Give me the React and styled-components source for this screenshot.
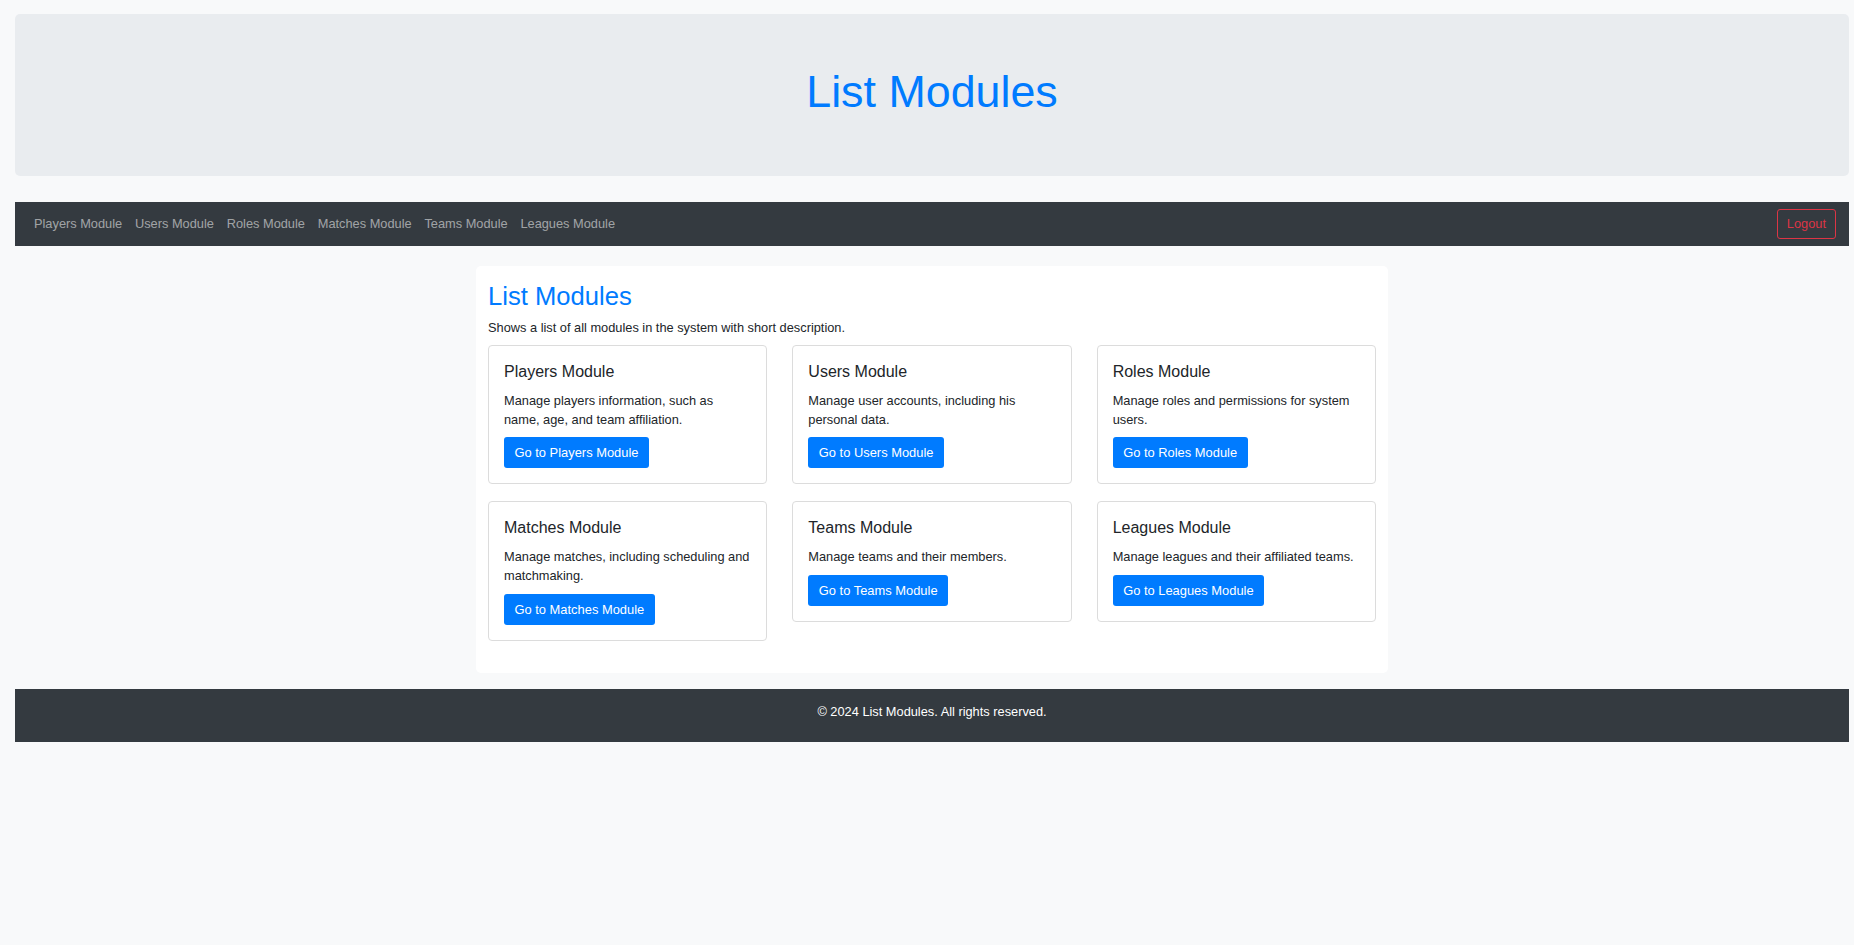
import styled, { createGlobalStyle } from "styled-components";

const GlobalStyle = createGlobalStyle`
  html, body {
    margin: 0;
    padding: 0;
    background: #f8f9fa;
    font-family: "Liberation Sans", Arial, sans-serif;
    color: #212529;
  }
  * { box-sizing: border-box; }
`;

const modules = [
  { name: "Players Module", text: "Manage players information, such as name, age, and team affiliation." },
  { name: "Users Module", text: "Manage user accounts, including his personal data." },
  { name: "Roles Module", text: "Manage roles and permissions for system users." },
  { name: "Matches Module", text: "Manage matches, including scheduling and matchmaking." },
  { name: "Teams Module", text: "Manage teams and their members." },
  { name: "Leagues Module", text: "Manage leagues and their affiliated teams." },
];

const Page = styled.div`
  padding: 14px 5px 0 15px;
`;

const Header = styled.header`
  background: #e9ecef;
  border-radius: 5px;
  padding: 51px 0 57px;
  text-align: center;

  h1 {
    margin: 0;
    font-size: 44.8px;
    line-height: 1.2;
    font-weight: 400;
    color: #007bff;
  }
`;

const Navbar = styled.nav`
  margin-top: 26px;
  height: 44px;
  background: #343a40;
  display: flex;
  align-items: center;
  justify-content: space-between;
  padding: 0 13px 0 12.6px;
`;

const NavLinks = styled.div`
  display: flex;
  align-items: center;
`;

const NavLink = styled.a`
  padding: 0 6.4px;
  font-size: 12.8px;
  color: rgba(255, 255, 255, 0.55);
  text-decoration: none;
  cursor: pointer;
`;

const LogoutButton = styled.button`
  height: 30px;
  padding: 0 9px;
  font-family: inherit;
  font-size: 12.8px;
  color: #dc3545;
  background: transparent;
  border: 1px solid #dc3545;
  border-radius: 3px;
`;

const Main = styled.main`
  width: 912px;
  margin: 20px auto 0;
  background: #fff;
  border-radius: 5px;
  padding: 15px 12px 32px;
`;

const Title = styled.h2`
  margin: 0;
  font-size: 25.6px;
  line-height: 1.2;
  font-weight: 400;
  color: #007bff;
`;

const Lead = styled.p`
  margin: 8px 0 7px;
  font-size: 12.8px;
  line-height: 1.45;
`;

const Grid = styled.div`
  display: grid;
  grid-template-columns: repeat(3, 1fr);
  column-gap: 25px;
  row-gap: 17px;
  align-items: start;
`;

const ModuleCard = styled.div`
  border: 1px solid #dcdcdc;
  border-radius: 4px;
  padding: 16px 15px 15px;
  background: #fff;

  h3 {
    margin: 0;
    font-size: 16px;
    line-height: 1.2;
    font-weight: 400;
    color: #212529;
  }

  p {
    margin: 11px 0 8px;
    font-size: 12.8px;
    line-height: 1.45;
  }
`;

const GoButton = styled.a`
  display: inline-block;
  padding: 6px 10.5px;
  font-size: 12.9px;
  line-height: 19px;
  color: #fff;
  background: #007bff;
  border-radius: 3px;
  text-decoration: none;
  cursor: pointer;
`;

const Footer = styled.footer`
  margin-top: 16px;
  background: #343a40;
  color: #fff;
  text-align: center;
  font-size: 12.8px;
  line-height: 19px;
  padding: 13px 0 21px;
`;

export default function App() {
  return (
    <>
      <GlobalStyle />
      <Page>
        <Header>
          <h1>List Modules</h1>
        </Header>
        <Navbar>
          <NavLinks>
            {modules.map((m) => (
              <NavLink key={m.name}>{m.name}</NavLink>
            ))}
          </NavLinks>
          <LogoutButton>Logout</LogoutButton>
        </Navbar>
        <Main>
          <Title>List Modules</Title>
          <Lead>Shows a list of all modules in the system with short description.</Lead>
          <Grid>
            {modules.map((m) => (
              <ModuleCard key={m.name}>
                <h3>{m.name}</h3>
                <p>{m.text}</p>
                <GoButton>Go to {m.name}</GoButton>
              </ModuleCard>
            ))}
          </Grid>
        </Main>
        <Footer>© 2024 List Modules. All rights reserved.</Footer>
      </Page>
    </>
  );
}
